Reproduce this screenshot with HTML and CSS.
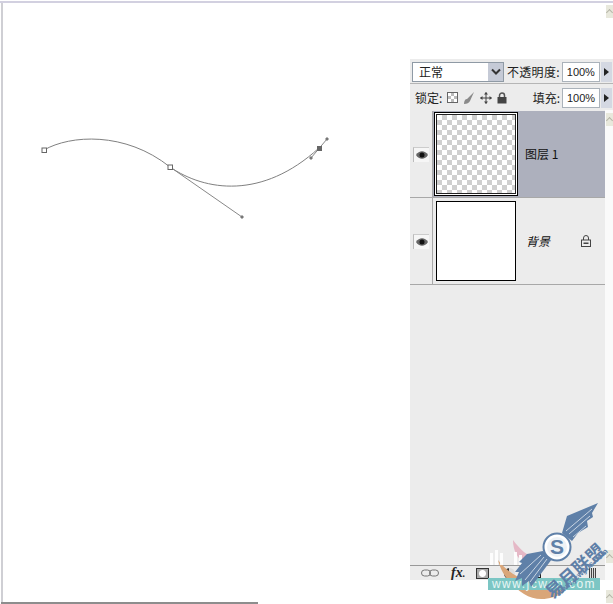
FILE: index.html
```html
<!DOCTYPE html>
<html lang="zh">
<head>
  <meta charset="UTF-8">
  <meta name="viewport" content="width=device-width, initial-scale=1.0">
  <title>图层</title>
  <link rel="stylesheet" href="styles.css">
</head>
<body>
  <div class="page">
    <div class="top-rule"></div>
    <div class="main">
      <div class="canvas">
        <svg class="path-art" viewBox="0 0 410 600" width="410" height="600">
          <path class="curve" d="M44 150C70 135 125 131 170 167"/>
          <path class="curve" d="M170 167C205 191 262 200 319 148"/>
          <path class="handle" d="M170 167L242 217"/>
          <path class="handle" d="M311 158L327 139"/>
          <rect class="anchor" x="42" y="148" width="4.500" height="4.500"/>
          <rect class="anchor" x="168" y="165" width="4.500" height="4.500"/>
          <rect class="anchor-on" x="317" y="146" width="5" height="5"/>
          <path class="knob" d="M242 215l2 2-2 2-2-2z"/>
          <path class="knob" d="M311 156l2 2-2 2-2-2z"/>
          <path class="knob" d="M327 137l2 2-2 2-2-2z"/>
        </svg>
      </div>

      <div class="side">
        <div class="panel">
          <div class="row row-blend">
            <div class="select">
              <span class="select-text">正常</span>
              <span class="select-btn">
                <svg viewBox="0 0 12 8" width="12" height="8"><path d="M2 1.500l4 4 4-4" fill="none" stroke="#333" stroke-width="2"/></svg>
              </span>
            </div>
            <span class="label label-opacity">不透明度:</span>
            <span class="field">100%</span>
            <span class="arrow"></span>
          </div>

          <div class="row row-lock">
            <span class="label">锁定:</span>
            <div class="lock-icons">
              <span class="lock-check"></span>
              <svg viewBox="0 0 12 12" width="12" height="12"><path d="M1 12c0-3 1-5 3-5L11 0 7 9c-1 2-3 3-6 3z" fill="#8a8a8a"/></svg>
              <svg viewBox="0 0 12 12" width="12" height="12"><path d="M6 0.500V11.500M0.500 6H11.500" stroke="#444" fill="none"/><path d="M6 0l2 2.500H4zM6 12l2-2.500H4zM0 6l2.500-2v4zM12 6L9.500 4v4z" fill="#444"/></svg>
              <svg viewBox="0 0 10 12" width="10" height="12"><path d="M2.500 5V3.500a2.500 2.500 0 0 1 5 0V5" fill="none" stroke="#555" stroke-width="1.500"/><rect x="0.500" y="5" width="9" height="6.500" fill="#444"/></svg>
            </div>
            <span class="label label-fill">填充:</span>
            <span class="field">100%</span>
            <span class="arrow"></span>
          </div>

          <div class="layers">
            <div class="layer layer-active">
              <div class="eye-cell">
                <span class="eye"><svg viewBox="0 0 14 10" width="14" height="10"><path d="M1 5c3-5 9-5 12 0-3 5-9 5-12 0z" fill="#666"/><circle cx="7" cy="5" r="2.500" fill="#111"/></svg></span>
              </div>
              <div class="layer-body">
                <div class="thumb thumb-active"><div class="thumb-check"></div></div>
                <span class="layer-name">图层 1</span>
              </div>
            </div>
            <div class="layer">
              <div class="eye-cell">
                <span class="eye"><svg viewBox="0 0 14 10" width="14" height="10"><path d="M1 5c3-5 9-5 12 0-3 5-9 5-12 0z" fill="#666"/><circle cx="7" cy="5" r="2.500" fill="#111"/></svg></span>
              </div>
              <div class="layer-body">
                <div class="thumb thumb-plain"></div>
                <span class="layer-name layer-name-bg">背景</span>
                <svg class="layer-lock" viewBox="0 0 10 12" width="10" height="12"><path d="M2.500 5V3a2.500 2.500 0 0 1 5 0v2" fill="none" stroke="#444"/><rect x="0.500" y="5" width="9" height="6.500" fill="#eee" stroke="#444"/><rect x="2.500" y="7.500" width="5" height="1.500" fill="#444"/></svg>
              </div>
            </div>
          </div>

          <div class="spacer"></div>

          <div class="tools">
            <svg viewBox="0 0 18 8" width="18" height="8"><rect x="0.500" y="1" width="9" height="6" rx="3" fill="none" stroke="#777"/><rect x="8.500" y="1" width="9" height="6" rx="3" fill="none" stroke="#777"/></svg>
            <span class="tool-fx">fx<small>.</small></span>
            <span class="tool-mask"></span>
            <span class="tool-adjust"></span>
            <span class="tool-folder"></span>
            <span class="tool-trash"></span>
          </div>
        </div>
        <div class="scroll-strip">
          <span class="scroll-btn scroll-head"></span>
          <span class="scroll-btn scroll-top"></span>
          <span class="scroll-btn scroll-low"></span>
          <span class="scroll-btn scroll-end"></span>
        </div>
      </div>
    </div>

    <div class="bottom-rule"></div>

    <div class="stamp">
      <svg class="stamp-art" viewBox="480 495 133 109" width="133" height="109">
        <path d="M513 540c6 8 12 14 18 16l-6 8c-8-6-12-14-12-24z" fill="#e5b8c6"/>
        <path d="M498 560c14 18 34 26 60 24l6 8c-12 8-28 10-40 2-12-8-22-18-26-34z" fill="#d9a679"/>
        <g fill="#fff" opacity=".9">
          <rect x="490" y="553" width="3" height="12"/>
          <rect x="495" y="550" width="3" height="15"/>
          <rect x="500" y="553" width="3" height="12"/>
          <rect x="514" y="552" width="3" height="13"/>
          <rect x="519" y="555" width="3" height="10"/>
        </g>
      </svg>
      <span class="stamp-band">www.jcwcn.com</span>
      <svg class="stamp-art stamp-front" viewBox="480 495 133 109" width="133" height="109">
        <path d="M562 533L567 516 598 503 592 513 593 517 587 521 588 527 578 533 572 541z" fill="#5f80a8"/>
        <path d="M566 531L592 509M569 534L590 516M573 537L586 526" stroke="#c8d4e2" stroke-width="1"/>
        <path d="M543 551L527 554 519 562 522 563 515 572 519 572 515 581 522 578 522 586 529 581 531 587 552 559z" fill="#5f80a8"/>
        <path d="M541 555L520 574M544 557L525 580M547 559L530 582" stroke="#c8d4e2" stroke-width="1"/>
        <circle cx="557" cy="547" r="13.500" fill="#fff" stroke="#5f80a8" stroke-width="2"/>
        <circle cx="557" cy="547" r="10" fill="#eef2f6"/>
      </svg>
      <span class="stamp-s">S</span>
      <span class="stamp-title">易月联盟</span>
      <span class="stamp-url">www.jcwyus.com</span>
    </div>
  </div>
</body>
</html>
```

FILE: styles.css
```css
html, body {
  margin: 0;
  padding: 0;
  background: #fff;
}
.page {
  position: relative;
  width: 613px;
  height: 604px;
  overflow: hidden;
  font-family: "Noto Sans CJK SC", "Liberation Sans", sans-serif;
  color: #222;
}
.top-rule {
  height: 2px;
  margin-top: 1px;
  background: #d2d0e0;
}
.main {
  display: flex;
  height: 601px;
}

/* canvas with the pen path */
.canvas {
  width: 409px;
  height: 599px;
  margin-left: 1px;
  box-sizing: border-box;
  border-left: 2px solid #cfcfd4;
  flex: none;
  overflow: hidden;
}
.path-art {
  display: block;
  margin: -3px 0 0 -3px;
}
.curve {
  fill: none;
  stroke: #808080;
  stroke-width: 1;
}
.handle {
  fill: none;
  stroke: #888;
  stroke-width: 1;
}
.anchor {
  fill: #fff;
  stroke: #666;
  stroke-width: 1;
}
.anchor-on { fill: #666; }
.knob { fill: #777; }

/* layers panel */
.side {
  flex: none;
  width: 203px;
  margin-top: 56px;
  height: 521px;
  display: flex;
  flex-direction: column;
  position: relative;
}
.panel {
  height: 100%;
  display: flex;
  flex-direction: column;
  background: #ececec;
  width: 195px;
}
.row {
  width: 203px;
  flex: none;
  display: flex;
  align-items: center;
  box-sizing: border-box;
  background: #ececec;
}
.row-blend {
  height: 25px;
  padding: 2px 1px 0 2px;
  border-bottom: 1px solid #b5b5b5;
}
.row-lock {
  height: 27px;
  padding: 0 1px 0 5px;
}
.label {
  font-size: 12px;
  line-height: 16px;
  white-space: nowrap;
}
.label-opacity {
  margin: 0 2px 0 3px;
  letter-spacing: 0.300px;
}
.label-fill { margin: 0 2px 0 auto; }
.select {
  width: 92px;
  height: 20px;
  box-sizing: border-box;
  border: 1px solid #8f9aa5;
  background: #fff;
  display: flex;
  justify-content: space-between;
  align-items: stretch;
}
.select-text {
  font-size: 12px;
  line-height: 18px;
  padding-left: 6px;
}
.select-btn {
  width: 15px;
  background: #c5cad6;
  display: flex;
  align-items: center;
  justify-content: center;
}
.field {
  width: 38px;
  height: 20px;
  box-sizing: border-box;
  border: 1px solid #aab2ba;
  background: #fff;
  font-family: "Liberation Sans", sans-serif;
  font-size: 11px;
  line-height: 18px;
  text-align: center;
  flex: none;
}
.arrow {
  width: 11px;
  height: 20px;
  margin-left: 1px;
  flex: none;
  box-sizing: border-box;
  background: #d4d8e2;
  position: relative;
}
.arrow::after {
  content: "";
  position: absolute;
  left: 3px;
  top: 6px;
  border-left: 5px solid #222;
  border-top: 4px solid transparent;
  border-bottom: 4px solid transparent;
}
.lock-icons {
  display: flex;
  align-items: center;
  gap: 5px;
  margin-left: 5px;
}
.lock-check {
  width: 11px;
  height: 11px;
  box-sizing: border-box;
  border: 1px solid #666;
  background: conic-gradient(#bbb 25%, #fff 0 50%, #bbb 0 75%, #fff 0) 0 0 / 6px 6px;
}

.layers {
  flex: none;
}
.layer {
  height: 87px;
  display: flex;
  box-sizing: border-box;
  border-bottom: 1px solid #a8a8a8;
}
.eye-cell {
  width: 23px;
  flex: none;
  box-sizing: border-box;
  border-right: 1px solid #a8a8a8;
  display: flex;
  align-items: center;
  padding-left: 3px;
}
.eye {
  width: 16px;
  height: 15px;
  background: #f6f6f6;
  border-left: 1px solid #bbb;
  border-top: 1px solid #ccc;
  box-sizing: border-box;
  display: flex;
  align-items: center;
  justify-content: center;
}
.layer-body {
  flex: 1;
  display: flex;
  align-items: center;
  position: relative;
}
.layer-active .layer-body { background: #adb0bd; }
.thumb { flex: none; }
.thumb-active {
  width: 84px;
  height: 84px;
  margin-left: 1px;
  box-sizing: border-box;
  border: 1px solid #000;
  background: #fff;
  padding: 1px;
}
.thumb-check {
  height: 100%;
  box-sizing: border-box;
  border: 1px solid #222;
  background: conic-gradient(#cfcfcf 25%, #fff 0 50%, #cfcfcf 0 75%, #fff 0) 0 0 / 10px 10px;
}
.thumb-plain {
  width: 80px;
  height: 80px;
  margin-left: 3px;
  box-sizing: border-box;
  border: 1px solid #000;
  background: #fff;
}
.layer-name {
  font-size: 12px;
  line-height: 16px;
  margin-left: 7px;
  white-space: nowrap;
  color: #111;
}
.layer-name-bg {
  margin-left: 10px;
  font-style: italic;
}
.layer-lock { margin-left: 31px; }
.spacer { flex: 1; }

.tools {
  height: 15px;
  flex: none;
  box-sizing: border-box;
  border-top: 1px solid #999;
  display: flex;
  align-items: center;
  padding-left: 11px;
}
.tool-fx {
  margin-left: 12px;
  font-family: "Liberation Serif", serif;
  font-style: italic;
  font-weight: bold;
  font-size: 14px;
  line-height: 14px;
}
.tool-fx small {
  font-size: 10px;
  margin-right: 11px;
}
.tool-mask {
  width: 13px;
  height: 11px;
  box-sizing: border-box;
  border: 1px solid #333;
  background: radial-gradient(circle, #fff 3px, #aaa 4px);
}
.tool-adjust {
  width: 11px;
  height: 11px;
  margin-left: 15px;
  border-radius: 50%;
  background: linear-gradient(90deg, #333 50%, #ddd 50%);
}
.tool-folder {
  width: 11px;
  height: 9px;
  margin-left: 15px;
  box-sizing: border-box;
  border: 1px solid #222;
}
.tool-trash {
  width: 7px;
  height: 10px;
  margin-left: 48px;
  background: repeating-linear-gradient(90deg, #444 0 1px, #ddd 1px 2px);
}

.scroll-strip {
  position: absolute;
  top: 51px;
  left: 195px;
  width: 8px;
  height: 470px;
  background: #fafafa;
}
.scroll-btn {
  position: absolute;
  left: 1px;
  width: 7px;
  height: 13px;
  background: #e8e8dc;
}
.scroll-btn::after {
  content: "";
  position: absolute;
  left: 1px;
  top: 5px;
  width: 4px;
  height: 4px;
  border-left: 1px solid #b5b5a8;
  border-top: 1px solid #b5b5a8;
  transform: rotate(45deg);
}
.scroll-head { top: -105px; }
.scroll-top { top: 3px; }
.scroll-low { top: 440px; }
.scroll-end { top: 480px; }

/* strip along the bottom edge */
.bottom-rule {
  position: absolute;
  left: 1px;
  top: 602px;
  width: 257px;
  height: 2px;
  background: #8d8d8d;
}

/* site watermark over the corner */
.stamp {
  position: absolute;
  left: 480px;
  top: 495px;
  width: 133px;
  height: 109px;
  overflow: hidden;
}
.stamp-art {
  display: block;
}
.stamp-front {
  position: absolute;
  left: 0;
  top: 0;
}
.stamp-s {
  position: absolute;
  left: 69px;
  top: 40px;
  width: 16px;
  text-align: center;
  font-family: "Liberation Sans", sans-serif;
  font-weight: bold;
  font-size: 21px;
  line-height: 24px;
  color: #5f80a8;
}
.stamp-band {
  position: absolute;
  left: 8px;
  top: 83px;
  width: 112px;
  height: 12px;
  background: #7cc6c4;
  color: #e8f6f5;
  font-family: "Liberation Sans", sans-serif;
  font-size: 12px;
  line-height: 12px;
  letter-spacing: 1.500px;
  white-space: nowrap;
  text-align: center;
}
.stamp-title {
  position: absolute;
  left: 58px;
  top: 64px;
  width: 72px;
  text-align: center;
  font-size: 18px;
  line-height: 22px;
  font-weight: 700;
  color: #5f80a8;
  transform: rotate(-42deg);
  white-space: nowrap;
}
.stamp-url {
  position: absolute;
  left: 70px;
  top: 74px;
  width: 62px;
  text-align: center;
  font-family: "Liberation Sans", sans-serif;
  font-weight: bold;
  font-size: 8px;
  line-height: 10px;
  color: #5f80a8;
  transform: rotate(-42deg);
  white-space: nowrap;
}
```
